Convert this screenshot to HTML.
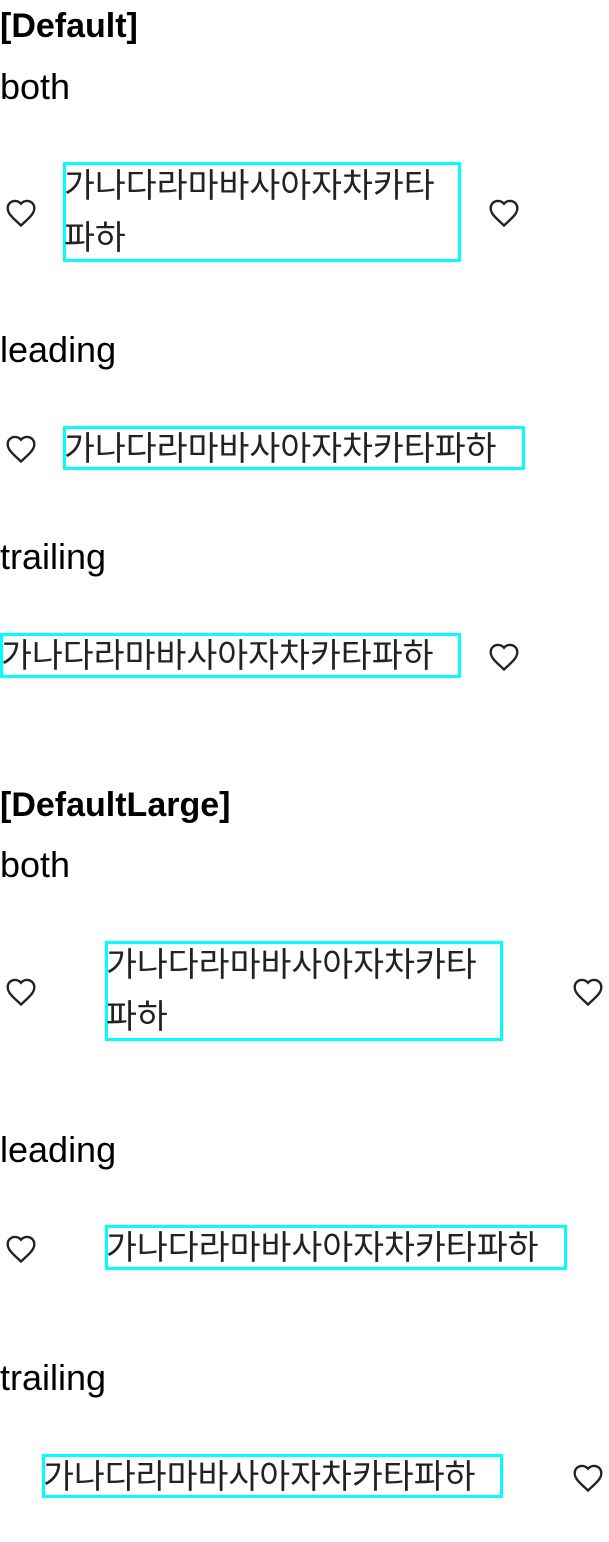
<!DOCTYPE html>
<html><head><meta charset="utf-8"><style>
body{margin:0;width:609px;height:1542px;background:#fff;position:relative;overflow:hidden;font-family:"Liberation Sans","Noto Sans CJK KR",sans-serif;color:#000}
.l{position:absolute;left:0;font-size:36px;line-height:40px;white-space:nowrap}
.b{font-weight:bold;font-size:34px}
.box{position:absolute;border:3px solid #00FFFF;box-sizing:border-box;font-family:"Noto Sans CJK KR",sans-serif;font-size:33.6px;color:#222;line-height:52px;overflow:visible}
.box>div{margin-left:-2px}
.one{line-height:36px;white-space:nowrap}
.h{position:absolute;width:38px;height:38px}
</style></head><body>
<div class="l b" style="top:6px">[Default]</div>
<div class="l" style="top:67px">both</div>
<div class="box" style="left:63px;top:162px;width:398px;height:100px;"><div style="margin-top:-8px">가나다라마바사아자차카타<br>파하</div></div>
<div class="l" style="top:330px">leading</div>
<div class="box one" style="left:63px;top:426px;width:462px;height:44px;"><div style="margin-top:-1px">가나다라마바사아자차카타파하</div></div>
<div class="l" style="top:537px">trailing</div>
<div class="box one" style="left:0;top:633px;width:461px;height:45px;"><div style="margin-top:-1px">가나다라마바사아자차카타파하</div></div>
<div class="l b" style="top:785px">[DefaultLarge]</div>
<div class="l" style="top:845px">both</div>
<div class="box" style="left:105px;top:941px;width:398px;height:100px"><div style="margin-top:-8px">가나다라마바사아자차카타<br>파하</div></div>
<div class="l" style="top:1130px">leading</div>
<div class="box one" style="left:105px;top:1225px;width:462px;height:45px;"><div style="margin-top:-1px">가나다라마바사아자차카타파하</div></div>
<div class="l" style="top:1358px">trailing</div>
<div class="box one" style="left:42px;top:1454px;width:461px;height:44px;"><div style="margin-top:-1px">가나다라마바사아자차카타파하</div></div>
<svg width="0" height="0" style="position:absolute"><defs><symbol id="ht" viewBox="0 0 24 24"><path d="M12 20.5l-1.2-1.1C6.5 15.5 3.6 12.9 3.6 9.6 3.6 7 5.6 5 8.2 5c1.5 0 2.9.7 3.8 1.8C12.9 5.7 14.3 5 15.8 5c2.6 0 4.6 2 4.6 4.6 0 3.3-2.9 5.9-7.2 9.8z" fill="none" stroke="#222" stroke-width="1.5"/></symbol></defs></svg>
<svg class="h" style="left:2px;top:193px"><use href="#ht"/></svg>
<svg class="h" style="left:485px;top:193px"><use href="#ht"/></svg>
<svg class="h" style="left:2px;top:429px"><use href="#ht"/></svg>
<svg class="h" style="left:485px;top:637px"><use href="#ht"/></svg>
<svg class="h" style="left:2px;top:972px"><use href="#ht"/></svg>
<svg class="h" style="left:569px;top:972px"><use href="#ht"/></svg>
<svg class="h" style="left:2px;top:1229px"><use href="#ht"/></svg>
<svg class="h" style="left:569px;top:1458px"><use href="#ht"/></svg>
</body></html>
